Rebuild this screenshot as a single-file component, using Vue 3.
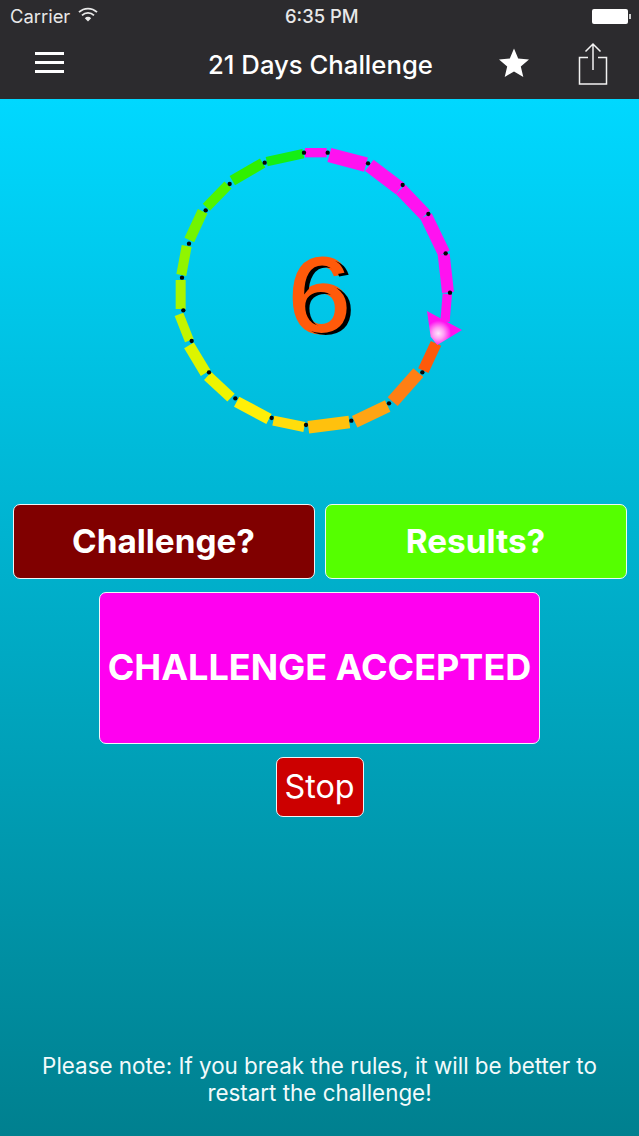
<template>
  <div class="app-container">
    <!-- 顶部：状态栏 + 导航栏 -->
    <header class="app-header">
      <div class="status-bar">
        <div class="status-left">
          <span>Carrier</span>
          <svg class="wifi" width="20" height="15" viewBox="0 0 20 15">
            <path d="M1 5.2a13 13 0 0 1 18 0" fill="none" stroke="#e8e8e8" stroke-width="1.8" />
            <path d="M4 8.4a8.6 8.6 0 0 1 12 0" fill="none" stroke="#e8e8e8" stroke-width="1.8" />
            <path d="M6.8 11.2 10 14.4l3.2-3.2a4.5 4.5 0 0 0-6.4 0z" fill="#e8e8e8" />
          </svg>
        </div>
        <span class="status-time">6:35 PM</span>
        <div class="battery"><i class="battery-fill"></i><i class="battery-nub"></i></div>
      </div>
      <nav class="nav-bar">
        <div class="menu-icon"><i></i><i></i><i></i></div>
        <h1>21 Days Challenge</h1>
        <svg class="star" width="32" height="32" viewBox="0 0 32 32">
          <path d="M16 1.5l4.2 10 10.8.9-8.2 7.1 2.5 10.6L16 24.4l-9.3 5.7 2.5-10.6L1 12.4l10.8-.9z" fill="#fff" />
        </svg>
        <svg class="share" width="32" height="44" viewBox="0 0 32 44">
          <path d="M11 15.500H2.500v26.500h27V15.500H21" fill="none" stroke="#f2f2f2" stroke-width="1.500" />
          <path d="M16 28V2M8.500 9.500 16 2l7.500 7.500" fill="none" stroke="#f2f2f2" stroke-width="1.500" />
        </svg>
      </nav>
    </header>

    <main class="content">
      <!-- 21天进度环 -->
      <div class="ring">
        <svg width="320" height="320" viewBox="0 0 960 960">
          <defs>
            <radialGradient id="glow" gradientUnits="userSpaceOnUse" cx="835" cy="610" r="38">
              <stop offset="0" stop-color="#ffe6fb" />
              <stop offset="0.45" stop-color="#ff9cf5" />
              <stop offset="1" stop-color="#ff12f0" />
            </radialGradient>
          </defs>
          <line
            v-for="(s, i) in segments"
            :key="i"
            :x1="s[0]"
            :y1="s[1]"
            :x2="s[2]"
            :y2="s[3]"
            :stroke-width="s[4]"
            :stroke="s[5]"
          />
          <circle v-for="(d, i) in dots" :key="'d' + i" :cx="d[0]" :cy="d[1]" r="6.500" fill="#050505" />
          <polygon points="801,543 906,600 832,645 812,620" fill="url(#glow)" />
        </svg>
        <span class="day-count">6</span>
      </div>

      <div class="btn-row">
        <button class="btn btn-challenge">Challenge?</button>
        <button class="btn btn-results">Results?</button>
      </div>
      <button class="btn btn-accepted">CHALLENGE ACCEPTED</button>
      <button class="btn btn-stop">Stop</button>

      <p class="note">Please note: If you break the rules, it will be better to restart the challenge!</p>
    </main>
  </div>
</template>

<script setup>
// x1, y1, x2, y2, 宽度, 颜色（顺时针，从顶部开始）
const segments = [
  [435, 68, 500, 68, 28, '#ff12f0'],
  [508, 75, 618, 104, 44, '#ff12f0'],
  [628, 106, 720, 176, 42, '#ff12f0'],
  [722, 178, 796, 255, 40, '#ff12f0'],
  [798, 258, 852, 370, 38, '#ff12f0'],
  [851, 373, 864, 487, 36, '#ff12f0'],
  [862, 492, 855, 575, 28, '#ff12f0'],
  [828, 640, 790, 722, 34, '#ff5a0a'],
  [775, 728, 698, 815, 40, '#ff7f14'],
  [683, 828, 584, 875, 38, '#ffa414'],
  [568, 876, 445, 892, 38, '#ffc10d'],
  [433, 891, 340, 872, 30, '#ffdd0c'],
  [327, 867, 230, 815, 34, '#ffef08'],
  [213, 803, 143, 738, 32, '#eef400'],
  [137, 729, 87, 646, 34, '#dcf500'],
  [88, 632, 57, 553, 28, '#c4f500'],
  [62, 450, 62, 537, 30, '#aaf500'],
  [80, 348, 64, 435, 30, '#90f500'],
  [128, 244, 88, 330, 32, '#72f500'],
  [204, 165, 139, 232, 30, '#50f500'],
  [308, 99, 217, 152, 32, '#30f000'],
  [430, 71, 320, 95, 28, '#14ef14']
]

const dots = [
  [432, 68], [503, 68], [624, 100], [728, 165], [805, 252], [857, 370], [870, 488],
  [787, 727], [687, 820], [574, 872], [438, 885], [335, 864], [226, 805], [147, 727],
  [95, 633], [70, 541], [66, 443], [87, 341], [137, 241], [209, 162], [314, 98]
]
</script>

<style>
html,
body {
  margin: 0;
  padding: 0;
}
</style>

<style scoped>
* {
  box-sizing: border-box;
}

.app-container {
  display: flex;
  flex-direction: column;
  width: 639px;
  height: 1136px;
  overflow: hidden;
  font-family: Inter, "Liberation Sans", sans-serif;
  color: #fff;
}

/* 顶部 */
.app-header {
  height: 99px;
  background-color: #2c2b2e;
}
.status-bar {
  display: flex;
  align-items: center;
  justify-content: space-between;
  height: 33px;
  padding: 0 8px 1px 10px;
  position: relative;
  font-size: 18.400px;
  color: #e8e8e8;
}
.status-left {
  display: flex;
  align-items: center;
  gap: 8px;
}
.wifi {
  margin-top: -3px;
}
.status-time {
  position: absolute;
  left: 285px;
  font-weight: 500;
}
.battery {
  display: flex;
  align-items: center;
  gap: 1px;
}
.battery-fill {
  display: block;
  width: 36px;
  height: 15px;
  border-radius: 2px;
  background-color: #fff;
}
.battery-nub {
  display: block;
  width: 2px;
  height: 5px;
  background-color: #cfcfcf;
}
.nav-bar {
  display: flex;
  align-items: center;
  height: 66px;
  padding: 0 30px 0 35px;
}
.nav-bar h1 {
  flex: 1;
  margin: 0 0 4px;
  padding-left: 144px;
  font-size: 25.700px;
  font-weight: 500;
  white-space: nowrap;
}
.menu-icon {
  display: flex;
  flex-direction: column;
  gap: 6px;
  width: 29px;
  margin-bottom: 7px;
}
.menu-icon i {
  display: block;
  height: 3px;
  background-color: #fff;
}
.star {
  margin: 0 47px 6px 0;
}
.share {
  margin-bottom: 5px;
}

/* 内容区 */
.content {
  flex: 1;
  display: flex;
  flex-direction: column;
  align-items: center;
  padding-top: 31px;
  background: linear-gradient(#00d8ff, #00808f);
}
.ring {
  position: relative;
  width: 320px;
  height: 320px;
  margin-bottom: 54px;
}
.ring svg {
  display: block;
}
.day-count {
  position: absolute;
  left: 0;
  right: 0;
  top: 103px;
  text-align: center;
  font-family: "Liberation Sans", Arial, sans-serif;
  font-size: 106px;
  line-height: 124px;
  color: #ff5a0a;
  -webkit-text-stroke: 3px #ff5a0a;
  paint-order: stroke fill;
  text-shadow: 4px 2px 0 #000;
  transform: scaleX(1.07);
}
.btn-row {
  display: flex;
  gap: 10px;
  margin-bottom: 13px;
}
.btn {
  display: block;
  padding: 0 0 2px;
  border: 1.500px solid #eef6f8;
  border-radius: 7px;
  font-family: inherit;
  color: #fff;
  font-weight: 700;
}
.btn-challenge,
.btn-results {
  width: 302px;
  height: 75px;
  font-size: 33.300px;
}
.btn-challenge {
  background-color: #800000;
}
.btn-results {
  background-color: #55ff00;
}
.btn-accepted {
  width: 441px;
  height: 152px;
  font-size: 36px;
  background-color: #ff00f0;
  margin-bottom: 13px;
}
.btn-stop {
  width: 88px;
  height: 60px;
  font-size: 32.300px;
  font-weight: 400;
  background-color: #cc0000;
}
.note {
  margin: auto 0 30px;
  width: 590px;
  text-align: center;
  font-size: 22.400px;
  line-height: 27px;
  color: #f2fafb;
}
</style>
